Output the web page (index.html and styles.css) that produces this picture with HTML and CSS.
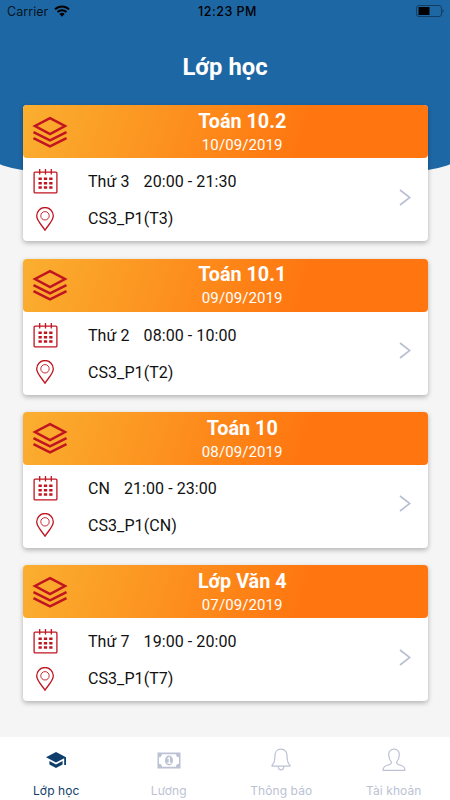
FILE: index.html
```html
<!DOCTYPE html>
<html lang="vi">
<head>
<meta charset="utf-8">
<meta name="viewport" content="width=device-width, initial-scale=1">
<title>Lớp học</title>
<link rel="stylesheet" href="styles.css">
</head>
<body>
<svg class="defs" aria-hidden="true">
  <symbol id="layers" viewBox="0 0 36 32">
    <path d="M18 2.2 33 10 18 18.200 3 10Z"/>
    <path d="M1.500 16.200 18 24.300 34.500 16.200M1.500 22.200 18 30.300 34.500 22.200"/>
  </symbol>
  <symbol id="calendar" viewBox="0 0 24 25">
    <rect x=".6" y="3.100" width="22.800" height="20.800" rx="1"/>
    <path d="M6.200 0v5.500M12 0v5.500M17.800 0v5.500"/>
    <path class="dots" d="M5 9.800h14M5 14.200h14M5 18.600h14"/>
  </symbol>
  <symbol id="pin" viewBox="0 0 18 24">
    <path d="M9 23.200C6.500 18.800.7 14 .7 8.800a8.300 8.300 0 0 1 16.600 0C17.300 14 11.500 18.800 9 23.200Z"/>
    <circle cx="9" cy="8.800" r="4.200" stroke-width=".9"/>
  </symbol>
  <symbol id="chevron" viewBox="0 0 12 17"><path d="m1 1 9.800 7.500L1 16"/></symbol>
</svg>
<div class="app">
  <div class="hero"></div>
  <header class="status">
    <div class="carrier">Carrier
      <svg class="wifi" viewBox="0 0 16 12"><path d="M1 4.400a10 10 0 0 1 14 0M3.500 7a6.500 6.500 0 0 1 9 0"/><path class="solid" d="M5.400 9a3.800 3.800 0 0 1 5.200 0L8 11.700Z"/></svg>
    </div>
    <div class="clock">12:23 PM</div>
    <svg class="battery" viewBox="0 0 28 12"><rect class="shell" x=".5" y=".5" width="25" height="11" rx="2.500"/><rect x="2.500" y="2" width="11" height="8"/><path d="M26.800 4q1.200 2 0 4Z"/></svg>
  </header>
  <h1>Lớp học</h1>
  <main>
    <article class="card">
      <div class="card-head"><svg class="layers"><use href="#layers"/></svg><div class="heading"><h2>Toán 10.2</h2><time>10/09/2019</time></div></div>
      <div class="card-body">
        <div class="rows"><div class="row"><svg class="calendar"><use href="#calendar"/></svg><p><span>Thứ 3</span><span>20:00 - 21:30</span></p></div><div class="row"><svg class="pin"><use href="#pin"/></svg><p>CS3_P1(T3)</p></div></div>
        <svg class="chevron"><use href="#chevron"/></svg>
      </div>
    </article>
    <article class="card">
      <div class="card-head"><svg class="layers"><use href="#layers"/></svg><div class="heading"><h2>Toán 10.1</h2><time>09/09/2019</time></div></div>
      <div class="card-body">
        <div class="rows"><div class="row"><svg class="calendar"><use href="#calendar"/></svg><p><span>Thứ 2</span><span>08:00 - 10:00</span></p></div><div class="row"><svg class="pin"><use href="#pin"/></svg><p>CS3_P1(T2)</p></div></div>
        <svg class="chevron"><use href="#chevron"/></svg>
      </div>
    </article>
    <article class="card">
      <div class="card-head"><svg class="layers"><use href="#layers"/></svg><div class="heading"><h2>Toán 10</h2><time>08/09/2019</time></div></div>
      <div class="card-body">
        <div class="rows"><div class="row"><svg class="calendar"><use href="#calendar"/></svg><p><span>CN</span><span>21:00 - 23:00</span></p></div><div class="row"><svg class="pin"><use href="#pin"/></svg><p>CS3_P1(CN)</p></div></div>
        <svg class="chevron"><use href="#chevron"/></svg>
      </div>
    </article>
    <article class="card">
      <div class="card-head"><svg class="layers"><use href="#layers"/></svg><div class="heading"><h2>Lớp Văn 4</h2><time>07/09/2019</time></div></div>
      <div class="card-body">
        <div class="rows"><div class="row"><svg class="calendar"><use href="#calendar"/></svg><p><span>Thứ 7</span><span>19:00 - 20:00</span></p></div><div class="row"><svg class="pin"><use href="#pin"/></svg><p>CS3_P1(T7)</p></div></div>
        <svg class="chevron"><use href="#chevron"/></svg>
      </div>
    </article>
  </main>
  <nav>
    <a class="tab active"><svg viewBox="0 0 24 24"><path class="fill" d="M12 4 2 9.300l10 5.300 8.200-4.300V17H22V9.300ZM5.400 13v3.500L12 20l6.600-3.500V13L12 16.500Z"/></svg><span>Lớp học</span></a>
    <a class="tab"><svg viewBox="0 0 24 24"><path class="fill" fill-rule="evenodd" d="M.5 4.500h23v16H.5ZM5 6.200a3.200 3.200 0 0 1-3 3v6.600a3.200 3.200 0 0 1 3 3h14a3.200 3.200 0 0 1 3-3V9.200a3.200 3.200 0 0 1-3-3Z"/><ellipse class="fill" cx="12" cy="12.500" rx="4" ry="5"/><path class="one" d="m10.500 10.700 1.800-1.200v5.700m-2 0h4"/></svg><span>Lương</span></a>
    <a class="tab"><svg viewBox="0 0 24 24"><path d="M12 1.200c-4 0-6 2.800-6 6.300 0 5.500-.7 7.700-2.900 9.500v1.200h17.800V17c-2.200-1.800-2.900-4-2.900-9.500 0-3.500-2-6.300-6-6.300ZM9.300 18.500c0 4.500 5.400 4.500 5.400 0"/></svg><span>Thông báo</span></a>
    <a class="tab"><svg viewBox="0 0 24 24"><path d="M12 1.200C8.500 1.200 6.500 3.500 6.700 7c.1 3.500 1 5.400 2.900 7.300-.2 2-2.100 2.500-4.700 3.200C2.400 18.200 1.100 19 1.100 22.400h21.800c0-3.400-1.300-4.200-3.800-4.900-2.600-.7-4.500-1.200-4.700-3.200 1.900-1.900 2.800-3.800 2.900-7.300.2-3.500-1.800-5.800-5.300-5.800Z"/></svg><span>Tài khoản</span></a>
  </nav>
</div>
</body>
</html>
```
FILE: styles.css
```css
* { box-sizing: border-box; }
body { margin: 0; font-family: Roboto, "Liberation Sans", sans-serif; color: #111; }
h1, h2, p { margin: 0; }
svg { display: block; flex: none; fill: none; }
.defs { position: absolute; width: 0; height: 0; }
.app { position: relative; isolation: isolate; display: flex; flex-direction: column; width: 450px; height: 800px; background: #f5f5f5; overflow: hidden; }
.hero { position: absolute; z-index: -1; top: 0; left: -10px; right: -10px; height: 171px; background: #1e67a5; border-radius: 0 0 50px 50px / 0 0 17px 17px; }
.status { display: grid; grid-template-columns: 1fr auto 1fr; align-items: center; height: 22px; padding: 0 6px 0 7px; font: 12.5px Inter, sans-serif; color: #061421; }
.carrier { display: flex; align-items: center; gap: 6px; letter-spacing: .05px; }
.clock { padding-left: 4px; color: #000; font-weight: 500; letter-spacing: .5px; }
.wifi { width: 16px; height: 12px; stroke: #000; stroke-width: 2; }
.solid { fill: #000; stroke: none; }
.battery { width: 28px; height: 12px; justify-self: end; fill: #000; }
.shell { fill: none; stroke: #123e63; }
h1 { height: 83.400px; padding-top: 30px; line-height: 30px; text-align: center; color: #fff; font-size: 23.800px; font-weight: 700; }
main { display: flex; flex-direction: column; gap: 17.300px; flex: 1; padding: 0 22.500px; }
.card { height: 136px; background: #fff; border-radius: 4px; box-shadow: 0 2px 5px rgba(0,0,0,.28); }
.card-head { display: flex; align-items: center; height: 53px; padding-left: 9.500px; border-radius: 4px; background: linear-gradient(108deg, #faaf30 0%, #ff750f 70%); color: #fff; }
.layers { width: 36px; height: 32px; stroke: #c01420; stroke-width: 2.500; }
.heading { flex: 1; padding: 2.500px 11px 0 0; text-align: center; }
h2 { font-size: 19.800px; line-height: 24px; font-weight: 700; }
time { display: block; font-size: 15px; line-height: 22px; letter-spacing: .1px; }
.card-body { display: flex; align-items: center; justify-content: space-between; height: 83px; padding: 1px 17px 0 10px; }
.row { display: flex; align-items: center; height: 37px; }
.row p { display: flex; gap: 14px; font-size: 16px; letter-spacing: .07px; }
.row svg { stroke: #c01420; stroke-width: 1.300; }
.calendar { width: 25px; height: 25px; margin-right: 30.500px; }
.dots { stroke-width: 2.500; stroke-dasharray: 3.300 2.050; }
.pin { width: 18px; height: 24px; margin: 0 34px 0 3.500px; }
.chevron { width: 12px; height: 17px; margin-bottom: 6px; stroke: #b7bed1; stroke-width: 1.600; }
nav { display: grid; grid-template-columns: repeat(4, 1fr); height: 63px; background: #fff; }
.tab { display: flex; flex-direction: column; align-items: center; padding-top: 11px; color: #bcc2d4; font: 12px Inter, sans-serif; letter-spacing: .1px; }
.tab svg { width: 24px; height: 24px; stroke: currentColor; stroke-width: 1.200; }
.tab span { margin-top: 11.400px; line-height: 16px; }
.tab .fill { fill: currentColor; stroke: none; }
.tab .one { stroke: #fff; }
.active { color: #103e6c; }
```
